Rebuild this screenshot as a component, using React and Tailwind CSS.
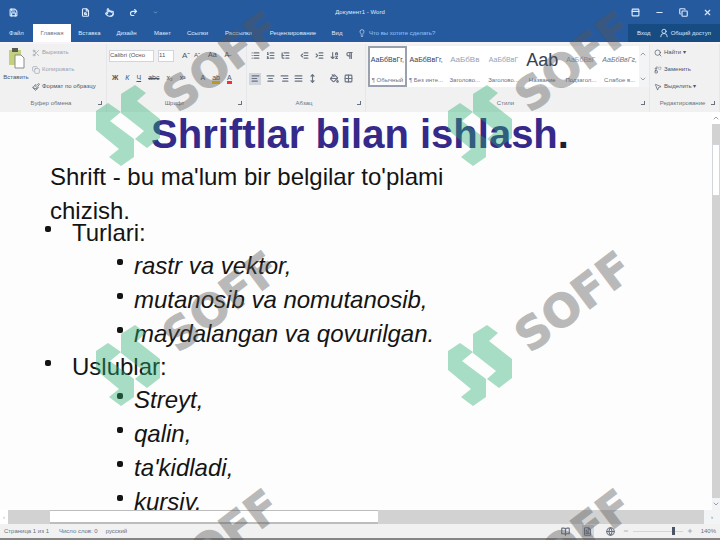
import React from "react";
import {
  Save, FileSearch, Pointer, Redo2, ChevronDown, Minus, PanelTop, Copy, X, Lightbulb, UserRound,
  Scissors, Paintbrush, List, ListOrdered, ListTree, IndentDecrease, IndentIncrease, ArrowDownAZ, Pilcrow,
  AlignLeft, AlignCenter, AlignRight, AlignJustify, PaintBucket, Grid2x2, MoveVertical, Search, Replace,
  MousePointer2, ChevronUp, BookOpen, FileText, Globe, Plus
} from "lucide-react";

const tabs = ["Файл", "Главная", "Вставка", "Дизайн", "Макет", "Ссылки", "Рассылки", "Рецензирование", "Вид"];

const styles = [
  { sample: "АаБбВвГг,", name: "¶ Обычный", look: "text-[7px] text-gray-700", active: true },
  { sample: "АаБбВвГг,", name: "¶ Без инте...", look: "text-[7px] text-gray-700" },
  { sample: "АаБбВв", name: "Заголово...", look: "text-[8px] text-gray-400" },
  { sample: "АаБбВвГ", name: "Заголово...", look: "text-[7px] text-gray-400" },
  { sample: "Aab", name: "Название", look: "text-[18px] text-gray-700" },
  { sample: "АаБбВвГ", name: "Подзагол...", look: "text-[7px] text-gray-400" },
  { sample: "АаБбВвГг,", name: "Слабое в...", look: "text-[7px] italic text-gray-500" },
];

const outline = [
  { title: "Turlari:", items: ["rastr va vektor,", "mutanosib va nomutanosib,", "maydalangan va qovurilgan."] },
  { title: "Uslublar:", items: ["Streyt,", "qalin,", "ta'kidladi,", "kursiv."] },
];

const marks = [[0, -240], [352, -240], [0, 0], [352, 0], [0, 238], [352, 238]];

const IconButton = ({ icon: Icon, label, className = "" }) => (
  <button aria-label={label} className={`flex items-center justify-center ${className}`}>
    <Icon className="size-[9px]" strokeWidth={3}/>
  </button>
)

const Group = ({ label, launcher, className = "", children }) => (
  <section className={`flex flex-col border-r border-gray-200 ${className}`}>
    <div className="h-[51px]">{children}</div>
    <div className="flex h-4 items-center px-1 text-gray-500">
      <span className="flex-1 text-center">{label}</span>
      {launcher ? <button aria-label={`${label}: параметры`} className="size-1 border-r border-b border-gray-500"/> : null}
    </div>
  </section>
)

const Command = ({ icon: Icon, label, className = "" }) => (
  <button className={`flex h-[17px] items-center gap-[2px] whitespace-nowrap ${className}`}>
    <Icon className="size-2" strokeWidth={2}/>
    {label}
  </button>
)

const TitleBar = () => (
  <header className="grid h-6 grid-cols-3 items-center bg-[#265a9f] text-[6px] text-blue-100">
    <div className="flex gap-[15px] pl-[9px]">
      <IconButton icon={Save} label="Сохранить" className="mr-12"/>
      <IconButton icon={FileSearch} label="Просмотр"/>
      <IconButton icon={Pointer} label="Режим касания"/>
      <IconButton icon={Redo2} label="Повторить"/>
      <button aria-label="Настроить панель"><ChevronDown className="size-[5px]"/></button>
    </div>
    <h1 className="text-center">Документ1 - Word</h1>
    <div className="flex justify-end gap-[15px] pr-2">
      <IconButton icon={PanelTop} label="Лента"/>
      <IconButton icon={Minus} label="Свернуть"/>
      <IconButton icon={Copy} label="Восстановить"/>
      <IconButton icon={X} label="Закрыть"/>
    </div>
  </header>
)

const TabBar = () => (
  <nav className="grid h-[18px] grid-cols-[33px_38px_37px_37px_35px_35px_47px_62px_26px_1fr_92px] bg-[#265a9f] text-[6px] text-blue-100">
    {tabs.map(tab => (
      <button
        key={tab}
        className={tab === "Главная" ? "bg-white text-[#6b6f86]" : ""}
      >
        {tab}
      </button>
    ))}
    <button className="flex items-center gap-[3px] pl-2 text-blue-300">
      <Lightbulb className="size-2 text-blue-100"/>
      Что вы хотите сделать?
    </button>
    <div className="flex items-center justify-center gap-2 bg-[#174c83]">
      <button>Вход</button>
      <button className="flex items-center gap-[2px] whitespace-nowrap">
        <UserRound className="size-[10px]"/>
        Общий доступ
      </button>
    </div>
  </nav>
)

const Ribbon = () => (
  <div className="flex h-[70px] border-t-2 border-[#f9f2f8] bg-[#f1f1f1] text-[6px] text-gray-600">
    <Group label="Буфер обмена" launcher className="w-[107px]">
      <div className="flex h-full">
        <button className="flex w-8 flex-col items-center gap-1 pt-[3px]">
          <svg viewBox="0 0 18 22" className="h-[22px] w-[18px]">
            <path d="M2 3h12v15H2z" fill="#c5cf7d"/>
            <path d="M5 1h6v4H5z" fill="#5b5b55"/>
            <path d="M8 8h6l3 3v10H8z" fill="#fff" stroke="#8b8b8b"/>
          </svg>
          Вставить
        </button>
        <div>
          <Command icon={Scissors} label="Вырезать" className="text-gray-400"/>
          <Command icon={Copy} label="Копировать" className="text-gray-400"/>
          <Command icon={Paintbrush} label="Формат по образцу"/>
        </div>
      </div>
    </Group>

    <Group label="Шрифт" launcher className="w-[140px]">
      <div className="flex h-[23px] items-center gap-1 px-[2px]">
        <select aria-label="Шрифт" className="h-3 w-[45px] appearance-none border border-gray-300 bg-white">
          <option>Calibri (Осно</option>
        </select>
        <select aria-label="Размер шрифта" className="h-3 w-4 appearance-none border border-gray-300 bg-white">
          <option>11</option>
        </select>
        <button className="ml-1 text-[8px]">Aˆ</button>
        <button>Aˇ</button>
        <button className="ml-1 text-[7px]">Aa</button>
        <button className="ml-1 text-[7px]">A̶</button>
      </div>
      <div className="flex h-[23px] items-center gap-[7px] pl-[5px] text-[7px]">
        <button className="font-bold">Ж</button>
        <button className="italic">К</button>
        <button className="underline">Ч</button>
        <button className="line-through">abc</button>
        <button>x₂</button>
        <button>x²</button>
        <button className="ml-2">A</button>
        <button className="border-b-3 border-yellow-400 leading-[7px]">ab</button>
        <button className="border-b-3 border-red-500 leading-[7px]">A</button>
      </div>
    </Group>

    <Group label="Абзац" launcher className="w-[119px]">
      <div className="flex h-[23px] items-center gap-[6px] pl-1 text-gray-500">
        <IconButton icon={List} label="Маркеры"/>
        <IconButton icon={ListOrdered} label="Нумерация"/>
        <IconButton icon={ListTree} label="Многоуровневый список"/>
        <IconButton icon={IndentDecrease} label="Уменьшить отступ" className="ml-1"/>
        <IconButton icon={IndentIncrease} label="Увеличить отступ"/>
        <IconButton icon={ArrowDownAZ} label="Сортировка"/>
        <IconButton icon={Pilcrow} label="Знаки абзаца"/>
      </div>
      <div className="flex h-[23px] items-center gap-[5px] pl-[2px] text-gray-500">
        <IconButton icon={AlignLeft} label="По левому краю" className="size-3 bg-gray-300"/>
        <IconButton icon={AlignCenter} label="По центру"/>
        <IconButton icon={AlignRight} label="По правому краю"/>
        <IconButton icon={AlignJustify} label="По ширине"/>
        <IconButton icon={MoveVertical} label="Интервал"/>
        <IconButton icon={PaintBucket} label="Заливка" className="ml-2"/>
        <IconButton icon={Grid2x2} label="Границы"/>
      </div>
    </Group>

    <Group label="Стили" launcher className="min-w-0 flex-1">
      <div className="flex pt-[2px] pl-[2px]">
        <div className="grid h-[41px] min-w-0 flex-1 grid-cols-7 bg-white">
          {styles.map((s, i) => (
            <button
              key={i}
              className={`flex flex-col items-center overflow-hidden whitespace-nowrap border-2 ${s.active ? "border-gray-400" : "border-transparent"}`}
            >
              <span className={`flex h-6 items-center ${s.look}`}>{s.sample}</span>
              <span className="mt-1 text-gray-500">{s.name}</span>
            </button>
          ))}
        </div>
        <div className="flex w-[10px] flex-col justify-between bg-gray-100 py-1 text-gray-500">
          <button aria-label="Вверх"><ChevronUp className="size-2"/></button>
          <button aria-label="Вниз"><ChevronDown className="size-2"/></button>
        </div>
      </div>
    </Group>

    <Group label="Редактирование" launcher className="w-[70px]">
      <Command icon={Search} label="Найти ▾" className="pl-1"/>
      <Command icon={Replace} label="Заменить" className="pl-1"/>
      <Command icon={MousePointer2} label="Выделить ▾" className="pl-1"/>
    </Group>
  </div>
)

const Document = () => (
  <main className="min-w-0 flex-1 bg-[#fdfdfd] text-2xl text-[#141414]">
    <h2 className="pl-2 text-center text-[40px] leading-[44px] font-bold text-[#35298a]">
      Shriftlar bilan ishlash<span className="text-[#1f1d35]">.</span>
    </h2>
    <p className="mt-1 ml-[50px] max-w-[420px] leading-[34px]">Shrift - bu ma'lum bir belgilar to'plami chizish.</p>
    <ul className="-mt-3 pl-[45px] leading-[34px]">
      {outline.map(section => (
        <li key={section.title} className="not-first:-mt-px">
          <div className="flex gap-[21px]">
            <span className="mt-[10px] size-[6px] rounded-[2px] bg-[#141414]"/>
            {section.title}
          </div>
          <ul className="-mt-px pl-[72px] italic">
            {section.items.map(item => (
              <li key={item} className="flex gap-[11px]">
                <span className="mt-[10px] size-[6px] rounded-[2px] bg-[#141414]"/>
                {item}
              </li>
            ))}
          </ul>
        </li>
      ))}
    </ul>
  </main>
)

const VerticalScroll = () => (
  <div className="flex w-2 flex-col bg-[#d2d2d2]">
    <button aria-label="Прокрутить вверх" className="flex h-3 items-center justify-center bg-white text-gray-500">
      <ChevronUp className="size-2"/>
    </button>
    <div className="mt-5 h-[52px] border border-gray-300 bg-white"/>
    <button aria-label="Прокрутить вниз" className="mt-auto flex h-3 items-center justify-center bg-gray-100 text-gray-500">
      <ChevronDown className="size-2"/>
    </button>
  </div>
)

const HorizontalScroll = () => (
  <div className="flex h-[14px] bg-[#d2d2d2]">
    <button aria-label="Прокрутить влево" className="w-2 bg-white text-[6px] text-gray-400">‹</button>
    <div className="ml-[42px] w-[328px] border-t border-b-2 border-[#bdbdbd] bg-white"/>
    <button aria-label="Прокрутить вправо" className="ml-auto w-4 bg-gray-100 text-[6px] text-gray-500">›</button>
  </div>
)

const StatusBar = () => (
  <footer className="flex h-4 items-center border-b-2 border-[#858585] bg-[#f1f1f1] px-1 text-[6px] text-gray-500">
    <span>Страница 1 из 1</span>
    <span className="ml-[10px]">Число слов: 0</span>
    <span className="ml-2">русский</span>
    <div className="ml-auto flex items-center gap-3">
      <IconButton icon={BookOpen} label="Режим чтения"/>
      <IconButton icon={FileText} label="Разметка" className="size-3 bg-gray-300"/>
      <IconButton icon={Globe} label="Веб-документ"/>
    </div>
    <button aria-label="Уменьшить" className="ml-2"><Minus className="size-[6px]"/></button>
    <div className="mx-1 flex w-[50px] items-center">
      <div className="h-px flex-1 bg-gray-300"/>
      <div className="h-2 w-[3px] bg-gray-600"/>
      <div className="h-px w-2 bg-gray-300"/>
    </div>
    <button aria-label="Увеличить"><Plus className="size-[6px]"/></button>
    <span className="ml-2">140%</span>
  </footer>
)

const Watermark = () => (
  <svg className="pointer-events-none absolute inset-0 h-full w-full" aria-hidden="true">
    {marks.map(([x, y]) => (
      <g key={`${x}:${y}`} transform={`translate(${x} ${y})`} opacity="0.4">
        <path
          d="M121 334L135 325L146 333L137 341L160 359V378L147 388L135 379L144 371L121 353ZM96 351L108 343L121 352L110 361L134 379V397L121 406L109 397L119 389L96 370Z"
          fill="#28af70"
        />
        <text
          transform="translate(178 354) rotate(-37)"
          className="font-['DejaVu_Sans',sans-serif] text-[45px] font-bold"
          fill="#555"
          stroke="#555"
          strokeWidth="1"
        >
          SOFF
        </text>
      </g>
    ))}
  </svg>
)

export default function App() {
  return (
    <div className="relative flex h-screen flex-col overflow-hidden font-['Liberation_Sans',sans-serif]">
      <TitleBar/>
      <TabBar/>
      <Ribbon/>
      <div className="flex min-h-0 flex-1">
        <Document/>
        <VerticalScroll/>
      </div>
      <HorizontalScroll/>
      <StatusBar/>
      <Watermark/>
    </div>
  )
}
